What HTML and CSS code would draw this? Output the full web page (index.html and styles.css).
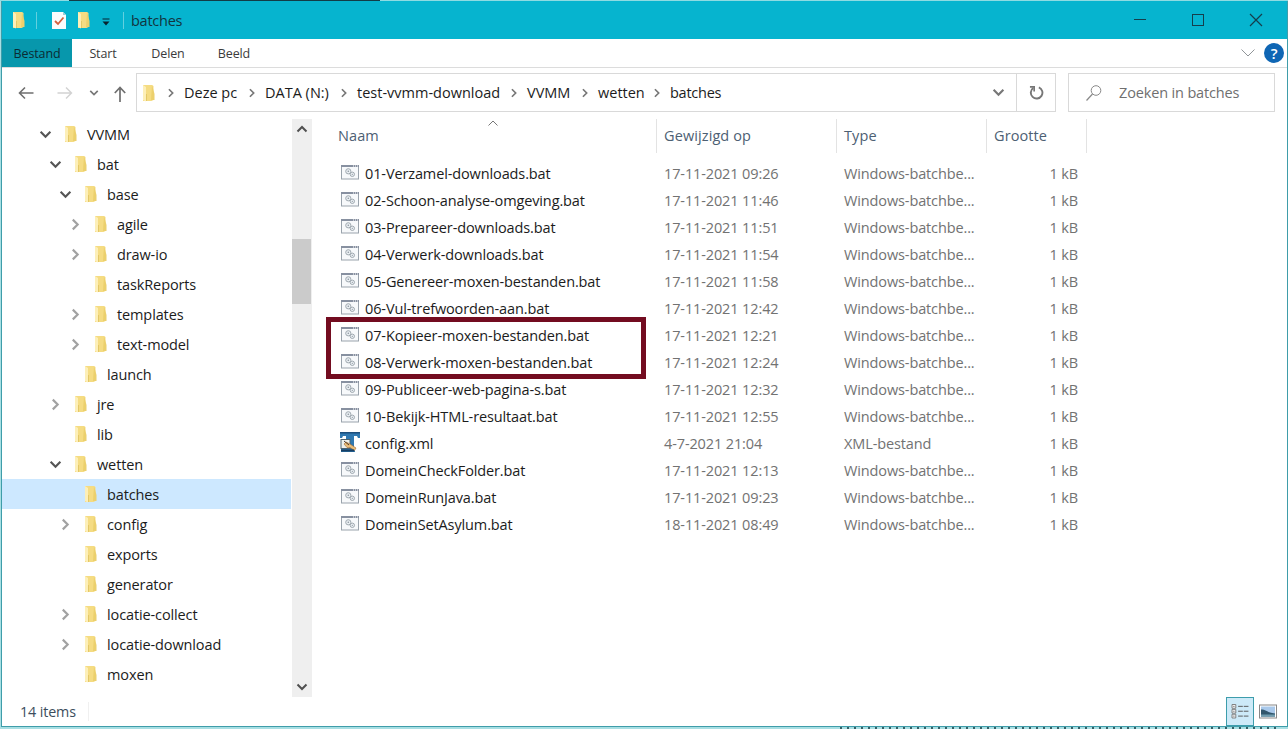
FILE: index.html
```html
<!DOCTYPE html>
<html lang="nl">
<head>
    <meta charset="UTF-8">
    <meta name="viewport" content="width=device-width, initial-scale=1.0">
    <title>batches</title>
    <link rel="stylesheet" href="styles.css">
</head>
<body>
    <!-- Shared icons -->
    <svg class="sprite">
        <symbol id="folder" viewBox="0 0 13 18">
            <path d="M1 1h9l1.500 1v14l-2 1H1z" fill="#f5dc83"/>
            <path d="M10 1l2.500 9v6H9z" fill="#ecd06d"/>
            <path d="M1 1l3 2v14.500L1 16z" fill="#fdefb8"/>
            <path d="M4 10h1v7H4z" fill="#e3c869"/>
        </symbol>
        <symbol id="chevron-down" viewBox="0 0 12 12">
            <path d="M1.500 3.500L6 8l4.500-4.500" fill="none" stroke="currentColor" stroke-width="2"/>
        </symbol>
        <symbol id="chevron-right" viewBox="0 0 12 12">
            <path d="M3.500 1.500L8 6l-4.500 4.500" fill="none" stroke="currentColor" stroke-width="2"/>
        </symbol>
        <symbol id="bat" viewBox="0 0 18 15">
            <rect x=".5" y=".5" width="17" height="13.500" fill="#f7f9fb" stroke="#9aa3ac"/>
            <path d="M0 1h18" stroke="#8790a0" stroke-width="2"/>
            <path d="M12 1h1M14 1h1M16 1h1" stroke="#fff"/>
            <circle cx="7.300" cy="6.300" r="2.600" fill="#e9eef2" stroke="#a0a9b0"/>
            <circle cx="7.300" cy="6.300" r=".8" fill="#8a949c"/>
            <circle cx="11.300" cy="9.300" r="2.200" fill="#e9eef2" stroke="#a0a9b0"/>
            <circle cx="11.300" cy="9.300" r=".6" fill="#8a949c"/>
        </symbol>
        <symbol id="xml" viewBox="0 0 20 20">
            <path d="M0 0h20v6h-2l-1-2h-3v12l1 2v2H1v-3h5V4H3L2 6H0z" fill="#2f78b0"/>
            <path d="M0 0h20v1.500H0z" fill="#1d4f7d"/>
            <rect x="1" y="7.500" width="9" height="9" fill="#eef2ee" stroke="#4d6470"/>
            <path d="M4 12l2-2 4 2 6 4-1.500 2.500-4.500-3-3 0z" fill="#e9bd78" stroke="#9d6833" stroke-width=".6"/>
            <path d="M4 9l5 4" stroke="#4b3827" stroke-width="1"/>
            <path d="M1 17.500h13v2H1z" fill="#173e63"/>
        </symbol>
    </svg>

    <div class="backdrop-top"></div>
    <div class="window">
        <header class="titlebar">
            <svg class="folder"><use href="#folder"/></svg>
            <span class="sep"></span>
            <svg class="properties" viewBox="0 0 14 17">
                <path d="M0 0h11l3 3v14H0z" fill="#fbfcfc"/>
                <path d="M11 0v3h3z" fill="#9fcdd6"/>
                <path d="M3 9l3 3 5.500-6.500" fill="none" stroke="#d2603f" stroke-width="1.800"/>
            </svg>
            <svg class="folder"><use href="#folder"/></svg>
            <svg class="customize" viewBox="0 0 8 8">
                <path d="M.5 1h7" stroke="#08394a" stroke-width="1.200"/>
                <path d="M.5 3.500h7L4 7.500z" fill="#08222e"/>
            </svg>
            <span class="sep"></span>
            <span class="title">batches</span>
            <div class="controls">
                <svg viewBox="0 0 14 14"><path d="M1 6.500h12" stroke="#153e4c"/></svg>
                <svg viewBox="0 0 14 14"><rect x="1.500" y="1.500" width="11" height="11" fill="none" stroke="#153e4c"/></svg>
                <svg viewBox="0 0 14 14"><path d="M1 1l12 12M13 1L1 13" stroke="#153e4c" stroke-width="1.200"/></svg>
            </div>
        </header>

        <nav class="ribbon">
            <span class="tab active">Bestand</span>
            <span class="tab">Start</span>
            <span class="tab">Delen</span>
            <span class="tab">Beeld</span>
            <svg class="expand" viewBox="0 0 14 8"><path d="M.5 .5L7 7 13.500 .5" fill="none" stroke="#909598"/></svg>
            <span class="help">?</span>
        </nav>

        <div class="toolbar">
            <div class="arrows">
                <svg class="back" viewBox="0 0 16 14"><path d="M15.500 7H1.500M7 1.500L1.500 7 7 12.500" fill="none" stroke="#6f6f6f" stroke-width="1.600"/></svg>
                <svg class="forward" viewBox="0 0 16 14"><path d="M.5 7h14M9 1.500L14.500 7 9 12.500" fill="none" stroke="#d2d2d2" stroke-width="1.400"/></svg>
                <svg class="recent"><use href="#chevron-down"/></svg>
                <svg class="up" viewBox="0 0 12 16"><path d="M6 16V1.500M.8 7L6 1.500 11.200 7" fill="none" stroke="#6f6f6f" stroke-width="1.700"/></svg>
            </div>
            <div class="address">
                <svg class="folder"><use href="#folder"/></svg>
                <svg class="chev"><use href="#chevron-right"/></svg>
                <div class="crumbs">
                    <span>Deze pc<svg class="chev"><use href="#chevron-right"/></svg></span>
                    <span>DATA (N:)<svg class="chev"><use href="#chevron-right"/></svg></span>
                    <span>test-vvmm-download<svg class="chev"><use href="#chevron-right"/></svg></span>
                    <span>VVMM<svg class="chev"><use href="#chevron-right"/></svg></span>
                    <span>wetten<svg class="chev"><use href="#chevron-right"/></svg></span>
                    <span>batches</span>
                </div>
                <svg class="history"><use href="#chevron-down"/></svg>
                <div class="refresh">
                    <svg viewBox="0 0 16 16"><path d="M4.500 3.200A6.200 6.200 0 1 0 10.500 2.500" fill="none" stroke="#777" stroke-width="2"/><path d="M1 2h4.500v5" fill="none" stroke="#777" stroke-width="1.800"/></svg>
                </div>
            </div>
            <div class="search">
                <svg viewBox="0 0 16 16"><circle cx="10" cy="5.500" r="4.800" fill="none" stroke="#888"/><path d="M6.500 9L.5 15.500" stroke="#888" stroke-width="1.200"/></svg>
                <span>Zoeken in batches</span>
            </div>
        </div>

        <main class="content">
            <ul class="tree" id="tree"></ul>
            <div class="scrollbar">
                <svg class="flip"><use href="#chevron-down"/></svg>
                <div class="thumb"></div>
                <svg><use href="#chevron-down"/></svg>
            </div>
            <section class="files">
                <div class="head">
                    <span>Naam<svg class="sort" viewBox="0 0 10 6"><path d="M.5 5.500L5 1l4.500 4.500" fill="none" stroke="#777"/></svg></span>
                    <span>Gewijzigd op</span>
                    <span>Type</span>
                    <span>Grootte</span>
                </div>
                <div id="rows"></div>
                <div class="highlight"></div>
            </section>
        </main>

        <footer class="status">
            <span class="count">14 items</span>
            <div class="views">
                <span class="view active">
                    <svg viewBox="0 0 18 16">
                        <path d="M.5 .5h4v4h-4zM.5 5.700h4v4h-4zM.5 10.900h4v4h-4z" fill="#fff" stroke="#777"/>
                        <path d="M2 2.500h1M2 7.700h1M2 12.900h1" stroke="#222"/>
                        <path d="M7 2.500h5M13 2.500h5M7 7.700h5M13 7.700h5M7 12.900h5M13 12.900h5" stroke="#555"/>
                    </svg>
                </span>
                <span class="view">
                    <svg viewBox="0 0 18 14">
                        <rect x=".5" y=".5" width="17" height="13" fill="#fff" stroke="#888"/>
                        <path d="M2 2h14v10H2z" fill="#a9c9eb"/>
                        <path d="M2 5c5 0 6 3 14 4v3H2z" fill="#31566c"/>
                        <path d="M2 10h14v2H2z" fill="#6f9cae"/>
                    </svg>
                </span>
            </div>
        </footer>
    </div>
    <div class="backdrop-bottom"></div>

    <script>
        // name, level, state (open / closed / leaf)
        const folders = [
            ['VVMM', 0, 'open'],
            ['bat', 1, 'open'],
            ['base', 2, 'open'],
            ['agile', 3, 'closed'],
            ['draw-io', 3, 'closed'],
            ['taskReports', 3, 'leaf'],
            ['templates', 3, 'closed'],
            ['text-model', 3, 'closed'],
            ['launch', 2, 'leaf'],
            ['jre', 1, 'closed'],
            ['lib', 1, 'leaf'],
            ['wetten', 1, 'open'],
            ['batches', 2, 'leaf'],
            ['config', 2, 'closed'],
            ['exports', 2, 'leaf'],
            ['generator', 2, 'leaf'],
            ['locatie-collect', 2, 'closed'],
            ['locatie-download', 2, 'closed'],
            ['moxen', 2, 'leaf']
        ];

        const files = [
            ['01-Verzamel-downloads.bat', '17-11-2021 09:26'],
            ['02-Schoon-analyse-omgeving.bat', '17-11-2021 11:46'],
            ['03-Prepareer-downloads.bat', '17-11-2021 11:51'],
            ['04-Verwerk-downloads.bat', '17-11-2021 11:54'],
            ['05-Genereer-moxen-bestanden.bat', '17-11-2021 11:58'],
            ['06-Vul-trefwoorden-aan.bat', '17-11-2021 12:42'],
            ['07-Kopieer-moxen-bestanden.bat', '17-11-2021 12:21'],
            ['08-Verwerk-moxen-bestanden.bat', '17-11-2021 12:24'],
            ['09-Publiceer-web-pagina-s.bat', '17-11-2021 12:32'],
            ['10-Bekijk-HTML-resultaat.bat', '17-11-2021 12:55'],
            ['config.xml', '4-7-2021 21:04'],
            ['DomeinCheckFolder.bat', '17-11-2021 12:13'],
            ['DomeinRunJava.bat', '17-11-2021 09:23'],
            ['DomeinSetAsylum.bat', '18-11-2021 08:49']
        ];

        document.getElementById('tree').innerHTML = folders.map(([name, level, state]) => {
            const icon = state === 'open' ? 'chevron-down' : 'chevron-right';
            return `<li class="level-${level} ${name === 'batches' ? 'selected' : ''}">
                <svg class="toggle ${state}"><use href="#${icon}"/></svg>
                <svg class="folder"><use href="#folder"/></svg>
                <span>${name}</span>
            </li>`;
        }).join('');

        document.getElementById('rows').innerHTML = files.map(([name, date]) => {
            const type = name.endsWith('.xml') ? 'xml' : 'bat';
            return `<div class="row">
                <span class="name"><svg class="icon-${type}"><use href="#${type}"/></svg>${name}</span>
                <span class="date">${date}</span>
                <span class="type">${type === 'xml' ? 'XML-bestand' : 'Windows-batchbe...'}</span>
                <span class="size">1 kB</span>
            </div>`;
        }).join('');
    </script>
</body>
</html>
```
FILE: styles.css
```css
* {
    margin: 0;
    padding: 0;
    box-sizing: border-box;
}

body {
    width: 1288px;
    height: 729px;
    overflow: hidden;
    background: #a8dfe3;
    font-family: 'Open Sans', 'Noto Sans', sans-serif;
    font-size: 14.5px;
    letter-spacing: -0.12px;
    color: #1c1c1c;
    display: flex;
    flex-direction: column;
}

svg {
    display: block;
    flex: none;
}

.sprite {
    display: none;
}

/* Desktop visible around the window */
.backdrop-top {
    height: 1px;
    background: linear-gradient(90deg, #8fdbe2 69px, #123c46 69px 380px, #8fdbe2 380px);
}

.backdrop-bottom {
    height: 2px;
    margin-left: 840px;
    width: 440px;
    background: repeating-linear-gradient(90deg, #345f66 0 2px, #a8dfe3 2px 7px);
}

.window {
    height: 726px;
    margin-left: 1px;
    background: white;
    border: 1px solid #3f9daa;
    border-top: 0;
    display: flex;
    flex-direction: column;
}

.folder {
    width: 13px;
    height: 18px;
}

/* Title bar */
.titlebar {
    height: 38px;
    background: #06b4cf;
    display: flex;
    align-items: center;
    padding-left: 10px;
}

.sep {
    width: 1px;
    height: 17px;
    margin-left: 11px;
    background: #62d0df;
}

.properties {
    width: 14px;
    height: 17px;
    margin: 0 11px 0 15px;
}

.customize {
    width: 8px;
    height: 8px;
    margin: 3px 2px 0 12px;
}

.title {
    margin-left: 7px;
    color: #12343f;
    letter-spacing: -0.25px;
}

.controls {
    margin-left: auto;
    margin-right: 23px;
    display: flex;
    gap: 44px;
}

.controls svg {
    width: 14px;
    height: 14px;
    margin-left: -1px;
    margin-right: 1px;
}

/* Ribbon */
.ribbon {
    height: 29px;
    border-bottom: 1px solid #dcdcdc;
    display: flex;
    align-items: center;
    font-size: 12.5px;
    color: #3b3b3b;
}

.tab {
    height: 28px;
    line-height: 29px;
    width: 66px;
    text-align: center;
}

.tab.active {
    width: 70px;
    margin-right: -2px;
    background: #0797ac;
    color: #0b2b33;
}

.tab.active + .tab {
    margin-right: -1px;
}

.expand {
    width: 14px;
    height: 8px;
    margin-left: auto;
}

.help {
    width: 20px;
    height: 20px;
    margin: 0 3px 0 9px;
    border-radius: 50%;
    background: #0f66b4;
    color: white;
    font-size: 15px;
    font-weight: 600;
    line-height: 20px;
    text-align: center;
}

/* Address bar */
.toolbar {
    height: 51px;
    padding-top: 5px;
    display: flex;
}

.arrows {
    width: 134px;
    height: 39px;
    padding-left: 16px;
    display: flex;
    align-items: center;
    color: #777;
}

.back,
.forward {
    width: 16px;
    height: 14px;
}

.forward {
    margin-left: 23px;
}

.recent {
    width: 10px;
    height: 10px;
    margin-left: 16px;
}

.up {
    width: 12px;
    height: 16px;
    margin: 2px 0 0 15px;
}

.address,
.search {
    height: 39px;
    border: 1px solid #d9d9d9;
    display: flex;
    align-items: center;
}

.address {
    width: 920px;
    padding-left: 5px;
    letter-spacing: 0;
}

.chev {
    width: 10px;
    height: 10px;
    color: #777;
}

.address > .chev {
    margin: 0 8px 0 11px;
}

.crumbs {
    display: grid;
    grid-template-columns: 81px 92px 170px 71px 72px 60px;
}

.crumbs span {
    display: flex;
    align-items: center;
    justify-content: space-between;
    padding-right: 8px;
    white-space: nowrap;
}

.crumbs span:last-child {
    letter-spacing: -0.25px;
}

.history {
    width: 13px;
    height: 13px;
    margin-left: auto;
    color: #777;
}

.refresh {
    width: 39px;
    height: 37px;
    margin-left: 11px;
    border-left: 1px solid #d9d9d9;
    display: flex;
    align-items: center;
    justify-content: center;
}

.refresh svg {
    width: 15px;
    height: 15px;
}

.search {
    width: 207px;
    margin-left: 12px;
    padding-left: 17px;
    gap: 17px;
    color: #6f6f6f;
    letter-spacing: -0.15px;
}

.search svg {
    width: 16px;
    height: 16px;
}

/* Folder tree */
.content {
    height: 578px;
    display: flex;
}

.tree {
    width: 289px;
    list-style: none;
}

.tree li {
    height: 30px;
    display: flex;
    align-items: center;
}

.tree .folder {
    margin: 0 10px 0 12px;
}

.toggle {
    width: 13px;
    height: 13px;
    margin-top: 1px;
    color: #555;
}

.toggle.closed {
    color: #a2a2a2;
}

.toggle.leaf {
    visibility: hidden;
}

.level-0 {
    padding-left: 37px;
}

.level-1 {
    padding-left: 47px;
}

.level-2 {
    padding-left: 57px;
}

.level-3 {
    padding-left: 67px;
}

.selected {
    background: #cde8ff;
}

.scrollbar {
    width: 20px;
    height: 578px;
    margin-left: 1px;
    background: #efefef;
    display: flex;
    flex-direction: column;
    align-items: center;
    justify-content: space-between;
    padding: 4px 0;
    color: #505050;
}

.scrollbar svg {
    width: 12px;
    height: 12px;
}

.scrollbar .flip {
    transform: scaleY(-1);
}

.thumb {
    width: 19px;
    height: 65px;
    margin: 104px 1px auto 0;
    background: #cbcbcb;
}

/* File list */
.files {
    position: relative;
    width: 800px;
    padding-left: 19px;
}

.head,
.row {
    display: grid;
    grid-template-columns: 326px 180px 150px 100px;
}

.head {
    height: 32px;
    margin-bottom: 9px;
    line-height: 34px;
    color: #4d6073;
    letter-spacing: 0.1px;
}

.head span {
    position: relative;
    padding-left: 7px;
    border-right: 1px solid #e3e3e3;
}

.sort {
    position: absolute;
    left: 157px;
    top: 1px;
    width: 10px;
    height: 6px;
}

.row {
    height: 27px;
    line-height: 27px;
    color: #727272;
}

.row span {
    white-space: nowrap;
    padding-left: 7px;
}

.row .name {
    padding-left: 10px;
    display: flex;
    align-items: center;
    color: #1c1c1c;
}

.icon-bat {
    width: 18px;
    height: 15px;
    margin: 0 6px 2px 0;
}

.icon-xml {
    width: 20px;
    height: 20px;
    margin: 0 5px 3px -1px;
}

.row .size {
    text-align: right;
    padding-right: 9px;
}

.highlight {
    position: absolute;
    left: 14px;
    top: 198px;
    width: 320px;
    height: 62px;
    border: 5px solid #730c20;
}

/* Status bar */
.status {
    height: 29px;
    padding: 0 6px 0 18px;
    display: flex;
    align-items: center;
    color: #3c4d5c;
}

.count {
    padding-right: 12px;
    border-right: 1px solid #f0f0f0;
    font-size: 14.3px;
}

.views {
    margin-left: auto;
    display: flex;
}

.view {
    width: 27px;
    height: 29px;
    display: flex;
    align-items: center;
    justify-content: center;
}

.view svg {
    width: 18px;
    height: 15px;
}

.view.active {
    width: 28px;
    background: #cdeaf8;
    border: 1px solid #3d9dac;
}
```
